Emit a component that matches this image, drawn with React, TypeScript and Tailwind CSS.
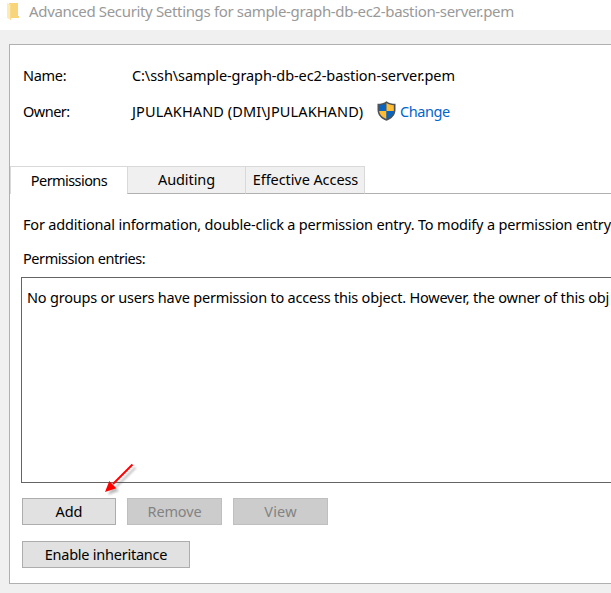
import type { ReactNode } from 'react';

function Folder() {
  return (
    <svg className="mt-[3px] h-[18px] w-[12px] shrink-0" viewBox="0 0 12 18">
      <path d="M2 0H11V13H12V15H2Z" fill="#f8d57a" />
      <path d="M0 0L4 2V17L0 15Z" fill="#ffeab3" />
      <path d="M3 2L4 2V17L3 16.5Z" fill="#f9dc8b" />
    </svg>
  );
}

function Shield() {
  return (
    <svg className="h-[20px] w-[19px] shrink-0" viewBox="0 0 19 20">
      <path d="M9.5 .3C7 2.2 4 2.8 .5 2.8V9C.5 14 4.3 18 9.5 19.8C14.7 18 18.5 14 18.5 9V2.8C15 2.8 12 2.2 9.5 .3Z" fill="#4d5358" />
      <path d="M9.5 2.1C7.5 3.5 5 4.1 2.2 4.3V10H9.5Z" fill="#0a63bd" />
      <path d="M9.5 2.1C11.5 3.5 14 4.1 16.8 4.3V10H9.5Z" fill="#ffbd35" />
      <path d="M2.2 10H9.5V18C5.3 16.4 2.5 13.7 2.2 10Z" fill="#ffbd35" />
      <path d="M16.8 10H9.5V18C13.7 16.4 16.5 13.7 16.8 10Z" fill="#0a63bd" />
    </svg>
  );
}

function Arrow() {
  return (
    <svg className="absolute top-[460px] left-[100px] h-[40px] w-[42px]" viewBox="0 0 42 40">
      <g opacity=".35" className="blur-[1px]" transform="translate(3 3)">
        <path d="M32.5 4.5L13 24" stroke="#444" strokeWidth="2" />
        <path d="M5 32L9.5 21.5L16 28Z" fill="#444" />
      </g>
      <path d="M32.5 4.5L13 24" stroke="#f00" strokeWidth="1.9" />
      <path d="M5 32L9.3 21L16.3 28.3Z" fill="#f00" />
    </svg>
  );
}

function Button({ className, disabled, children }: { className: string; disabled?: boolean; children: ReactNode }) {
  return (
    <button
      disabled={disabled}
      className={`flex h-[27px] items-center justify-center border pb-[2px] leading-[20px] ${
        disabled ? 'border-[#bfbfbf] bg-[#cccccc] text-[#838383]' : 'border-[#adadad] bg-[#e1e1e1] text-black'
      } ${className}`}
    >
      {children}
    </button>
  );
}

export default function App() {
  return (
    <div className="relative h-[593px] w-[611px] overflow-hidden bg-[#f0f0f0] font-['Noto_Sans','Open_Sans',sans-serif] text-[14.5px] leading-[20px] whitespace-nowrap text-black">
      <header className="flex h-[30px] bg-white pl-[7px] text-[#999999]">
        <Folder />
        <span className="ml-[10px] pt-px text-[15px] tracking-[-0.34px]">Advanced Security Settings for sample-graph-db-ec2-bastion-server.pem</span>
      </header>
      <main className="mt-[14px] ml-[9px] flex h-[540px] w-[620px] flex-col border border-[#b0b0b0] bg-white">
        <section className="flex h-[121px] shrink-0 flex-col gap-[16px] pt-[20px] pl-[13px]">
          <div className="flex h-[20px]">
            <span className="w-[109px] tracking-[-0.3px]">Name:</span>
            <span className="tracking-[-0.09px]">C:\ssh\sample-graph-db-ec2-bastion-server.pem</span>
          </div>
          <div className="flex h-[20px]">
            <span className="w-[109px] tracking-[-0.5px]">Owner:</span>
            <span className="w-[245px] tracking-[0.12px]">JPULAKHAND (DMI\JPULAKHAND)</span>
            <Shield />
            <a className="ml-[4px] tracking-[-0.45px] text-[#0066cc]">Change</a>
          </div>
        </section>
        <nav className="flex h-[28px] shrink-0">
          <div className="flex w-[117px] items-center justify-center border-t border-l border-[#d9d9d9] pb-[2px]">
            <span className="tracking-[-0.57px]">Permissions</span>
          </div>
          <div className="flex w-[118px] items-center justify-center border-t border-b border-l border-t-[#d9d9d9] border-b-[#b0b0b0] border-l-[#d9d9d9] bg-[#f0f0f0] pb-[2px]">
            <span className="tracking-[-0.1px]">Auditing</span>
          </div>
          <div className="flex w-[120px] items-center justify-center border-x border-t border-b border-x-[#d9d9d9] border-t-[#d9d9d9] border-b-[#b0b0b0] bg-[#f0f0f0] pb-[2px] pl-px">
            <span className="tracking-[-0.08px]">Effective Access</span>
          </div>
          <div className="flex-1 border-b border-[#b0b0b0]" />
        </nav>
        <section className="flex flex-col pl-[11px]">
          <p className="mt-[20px] ml-[2px] tracking-[-0.18px]">For additional information, double-click a permission entry. To modify a permission entry</p>
          <p className="mt-[14px] ml-[2px] tracking-[-0.43px]">Permission entries:</p>
          <div className="mt-[9px] h-[206px] border border-[#646464] pt-[9px] pl-[5px]">
            <span className="tracking-[-0.21px]">No groups or users have permission to access this object. However, the owner of this obj</span>
          </div>
          <div className="mt-[15px] ml-px flex">
            <Button className="w-[94px]">Add</Button>
            <Button className="ml-[11px] w-[95px] tracking-[-0.15px]" disabled>Remove</Button>
            <Button className="ml-[11px] w-[95px] tracking-[0.2px]" disabled>View</Button>
          </div>
          <Button className="mt-[16px] ml-px w-[168px] tracking-[-0.24px]">Enable inheritance</Button>
        </section>
      </main>
      <Arrow />
    </div>
  );
}
